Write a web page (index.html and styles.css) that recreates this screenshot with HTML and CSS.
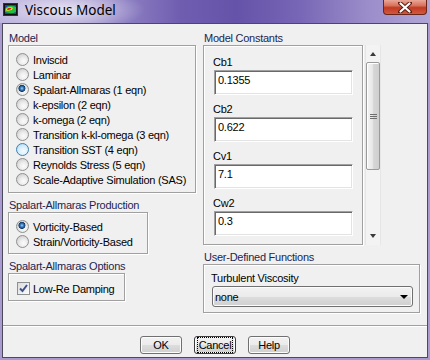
FILE: index.html
```html
<!DOCTYPE html>
<html lang="en">
<head>
    <meta charset="UTF-8">
    <title>Viscous Model</title>
    <link rel="stylesheet" href="styles.css">
</head>
<body>
    <div class="window">
        <div class="titlebar">
            <svg class="app-icon" width="15" height="13" viewBox="0 0 15 13">
                <rect x="0.5" y="0.5" width="14" height="12" fill="#111" stroke="#333"/>
                <rect x="2" y="2" width="11" height="9" fill="#1b3fd0"/>
                <path d="M2 6 C4 2, 9 2, 13 4 L13 9 C9 11, 5 10, 2 9 Z" fill="#22c040"/>
                <path d="M3 6 C5 3.5, 8 3.5, 10 5 C9 7.5, 6 8, 3 7.5 Z" fill="#e8e020"/>
                <path d="M4 6 C5.5 4.5, 7.5 4.5, 8.5 5.5 C7.5 7, 5.5 7, 4 6.8 Z" fill="#e02010"/>
            </svg>
            <span class="title">Viscous Model</span>
            <div class="close-btn">
                <svg width="14" height="11" viewBox="0 0 14 11">
                    <path d="M2 1 L12 10 M12 1 L2 10" stroke="#5a1a10" stroke-width="4" stroke-linecap="round"/>
                    <path d="M2.5 1.5 L11.5 9.5 M11.5 1.5 L2.5 9.5" stroke="#fff" stroke-width="2.2" stroke-linecap="round"/>
                </svg>
            </div>
        </div>
        <div class="client">
            <div class="main">
                <div class="col-left">
                    <div class="group">
                        <div class="group-label">Model</div>
                        <div class="group-box model-box">
                            <div class="radio"><span class="radio-dot"></span>Inviscid</div>
                            <div class="radio"><span class="radio-dot"></span>Laminar</div>
                            <div class="radio"><span class="radio-dot checked"></span>Spalart-Allmaras (1 eqn)</div>
                            <div class="radio"><span class="radio-dot"></span>k-epsilon (2 eqn)</div>
                            <div class="radio"><span class="radio-dot"></span>k-omega (2 eqn)</div>
                            <div class="radio"><span class="radio-dot"></span>Transition k-kl-omega (3 eqn)</div>
                            <div class="radio"><span class="radio-dot hover"></span>Transition SST (4 eqn)</div>
                            <div class="radio"><span class="radio-dot"></span>Reynolds Stress (5 eqn)</div>
                            <div class="radio"><span class="radio-dot"></span>Scale-Adaptive Simulation (SAS)</div>
                        </div>
                    </div>
                    <div class="group">
                        <div class="group-label">Spalart-Allmaras Production</div>
                        <div class="group-box production-box">
                            <div class="radio"><span class="radio-dot checked"></span>Vorticity-Based</div>
                            <div class="radio"><span class="radio-dot"></span>Strain/Vorticity-Based</div>
                        </div>
                    </div>
                    <div class="group">
                        <div class="group-label">Spalart-Allmaras Options</div>
                        <div class="group-box options-box">
                            <div class="check">
                                <span class="check-box">
                                    <svg width="11" height="11" viewBox="0 0 11 11">
                                        <path d="M2 5.5 L4.5 8 L9 2" fill="none" stroke="#3d4f8c" stroke-width="2"/>
                                    </svg>
                                </span>Low-Re Damping
                            </div>
                        </div>
                    </div>
                </div>
                <div class="col-right">
                    <div class="group">
                        <div class="group-label">Model Constants</div>
                        <div class="constants">
                            <div class="const-panel">
                                <div class="field">
                                    <div class="field-label">Cb1</div>
                                    <div class="field-input">0.1355</div>
                                </div>
                                <div class="field">
                                    <div class="field-label">Cb2</div>
                                    <div class="field-input">0.622</div>
                                </div>
                                <div class="field">
                                    <div class="field-label">Cv1</div>
                                    <div class="field-input">7.1</div>
                                </div>
                                <div class="field">
                                    <div class="field-label">Cw2</div>
                                    <div class="field-input">0.3</div>
                                </div>
                            </div>
                            <div class="scrollbar">
                                <div class="arrow arrow-up"></div>
                                <div class="thumb"><span class="grip"></span></div>
                                <div class="track-rest"></div>
                                <div class="arrow arrow-down"></div>
                            </div>
                        </div>
                    </div>
                    <div class="group">
                        <div class="group-label">User-Defined Functions</div>
                        <div class="group-box udf-box">
                            <div class="udf-label">Turbulent Viscosity</div>
                            <div class="dropdown">
                                <span>none</span>
                                <span class="dropdown-arrow"></span>
                            </div>
                        </div>
                    </div>
                </div>
            </div>
            <div class="separator"></div>
            <div class="buttons">
                <div class="btn">OK</div>
                <div class="btn focused"><span class="focus-ring">Cancel</span></div>
                <div class="btn">Help</div>
            </div>
        </div>
    </div>
</body>
</html>
```

FILE: styles.css
```css
body {
    margin: 0;
    font-family: "Liberation Sans", Arial, sans-serif;
    font-size: 11px;
    letter-spacing: -0.25px;
    color: #000;
    background: #a99ad0;
}
.window {
    width: 430px;
    height: 360px;
    display: flex;
    flex-direction: column;
    background: #a99ad0;
}
.titlebar {
    height: 23px;
    display: flex;
    align-items: flex-start;
    background:
        radial-gradient(ellipse 80px 22px at 65px 10px, rgba(255, 255, 255, 0.75), rgba(255, 255, 255, 0)),
        linear-gradient(90deg, #bcb3de 0%, #9d90cc 22%, #6f5eb0 42%, #6453a8 55%, #7867b6 70%, #9a8cc9 85%, #b0a5d6 100%);
}
.app-icon {
    margin: 3px 0 0 3px;
}
.title {
    margin-left: 7px;
    font-family: "Noto Sans", sans-serif;
    font-size: 13.5px;
    letter-spacing: 0;
    line-height: 21px;
    color: #000;
}
.close-btn {
    margin-left: auto;
    margin-right: 3px;
    width: 44px;
    height: 15px;
    box-sizing: border-box;
    border: 1px solid #6b2418;
    border-top: none;
    border-radius: 0 0 4px 4px;
    background: linear-gradient(#e9a797 0%, #d8725c 40%, #c23a22 55%, #cf5a40 100%);
    display: flex;
    justify-content: center;
    align-items: center;
}
.client {
    flex: 1;
    margin: 0 2px 2px 2px;
    border: 1px solid #4a4a5a;
    background: #f0f0f0;
    display: flex;
    flex-direction: column;
}
.main {
    display: flex;
    gap: 7px;
    padding: 7px 0 0 5px;
}
.col-left {
    width: 188px;
}
.col-right {
    width: 217px;
}
.group {
    margin-bottom: 5px;
}
.group-label {
    height: 14px;
    line-height: 14px;
    color: #1a2550;
    padding-left: 1px;
}
.group-box {
    border: 1px solid #a0a0a0;
    box-shadow: 1px 1px 0 #fff, inset 1px 1px 0 #fff;
}
.model-box {
    padding: 6px 0 5px 7px;
}
.production-box {
    width: 140px;
    padding: 6px 0 4px 7px;
    box-sizing: border-box;
}
.options-box {
    width: 117px;
    padding: 7px 0 4px 8px;
    box-sizing: border-box;
}
.radio, .check {
    display: flex;
    align-items: center;
    height: 15px;
}
.radio-dot {
    width: 13px;
    height: 13px;
    box-sizing: border-box;
    border-radius: 50%;
    border: 1px solid #8e8f8f;
    margin-right: 4px;
    background: radial-gradient(circle at 60% 65%, #fbfbfb 0, #eeeeee 35%, #d3d3d3 75%, #c4c4c4 100%);
}
.radio-dot.checked {
    background:
        radial-gradient(circle at 45% 40%, #a3d2f5 0, #3d82c4 1.5px, #10386b 3.2px, rgba(16, 56, 107, 0) 3.8px),
        radial-gradient(circle at 60% 65%, #fbfbfb 0, #eeeeee 35%, #d3d3d3 75%, #c4c4c4 100%);
}
.radio-dot.hover {
    border-color: #3c7fb1;
    background: radial-gradient(circle at 60% 65%, #f4fbff 0, #def1fc 40%, #b9dff6 80%, #a6d3f0 100%);
}
.check-box {
    width: 13px;
    height: 13px;
    box-sizing: border-box;
    border: 1px solid #8e8f8f;
    background: linear-gradient(135deg, #dcdcdc, #fbfbfb);
    margin-right: 3px;
    display: flex;
    align-items: center;
    justify-content: center;
}
.constants {
    display: flex;
    gap: 2px;
}
.const-panel {
    width: 160px;
    height: 200px;
    box-sizing: border-box;
    padding: 9px 0 0 9px;
    border: 1px solid #a0a0a0;
    box-shadow: inset 1px 1px 0 #fff, 1px 1px 0 #fff;
    overflow: hidden;
}
.field {
    margin-bottom: 7px;
}
.field-label {
    height: 14px;
    line-height: 14px;
    margin-bottom: 1px;
}
.field-input {
    width: 139px;
    height: 25px;
    margin-left: 1px;
    box-sizing: border-box;
    padding: 2px 0 0 3px;
    line-height: 14px;
    background: #fff;
    border-top: 1px solid #a0a0a0;
    border-left: 1px solid #a0a0a0;
    border-right: 1px solid #fff;
    border-bottom: 1px solid #fff;
    box-shadow: inset 1px 1px 0 #696969, inset -1px -1px 0 #e3e3e3;
}
.scrollbar {
    width: 16px;
    height: 200px;
    box-sizing: border-box;
    border-left: 1px solid #e6e6e6;
    border-right: 1px solid #e6e6e6;
    background: #f3f3f3;
    display: flex;
    flex-direction: column;
    align-items: center;
}
.arrow {
    height: 17px;
    width: 14px;
    position: relative;
}
.arrow::after {
    content: "";
    position: absolute;
    left: 4px;
    border-left: 3px solid transparent;
    border-right: 3px solid transparent;
}
.arrow-up::after {
    top: 7px;
    border-bottom: 4px solid #3a3a3a;
}
.arrow-down::after {
    top: 6px;
    border-top: 4px solid #3a3a3a;
}
.thumb {
    width: 14px;
    height: 108px;
    box-sizing: border-box;
    border: 1px solid #9a9a9a;
    border-radius: 2px;
    background: linear-gradient(90deg, #f4f4f4 0%, #e8e8e8 45%, #d6d6d6 55%, #cfcfcf 100%);
    box-shadow: inset 1px 1px 0 #fff;
    display: flex;
    align-items: center;
    justify-content: center;
}
.grip {
    width: 7px;
    height: 5px;
    background: linear-gradient(#6e6e6e 0 1px, transparent 1px 2px, #6e6e6e 2px 3px, transparent 3px 4px, #6e6e6e 4px 5px);
}
.track-rest {
    flex: 1;
}
.udf-box {
    padding: 6px 0 5px 7px;
}
.udf-label {
    height: 14px;
    line-height: 14px;
    margin-bottom: 1px;
}
.dropdown {
    width: 201px;
    height: 21px;
    margin-left: 1px;
    box-sizing: border-box;
    border: 1px solid #707070;
    border-radius: 3px;
    background: linear-gradient(#f2f2f2 0%, #ebebeb 50%, #dddddd 51%, #cfcfcf 100%);
    box-shadow: inset 0 0 0 1px #fcfcfc;
    display: flex;
    align-items: center;
    justify-content: space-between;
    padding: 0 4px 0 2px;
}
.dropdown-arrow {
    border-left: 4px solid transparent;
    border-right: 4px solid transparent;
    border-top: 4px solid #000;
}
.separator {
    margin-top: 7px;
    height: 1px;
    background: #a0a0a0;
    border-bottom: 1px solid #fff;
}
.buttons {
    display: flex;
    justify-content: center;
    gap: 12px;
    margin-top: 9px;
}
.btn {
    width: 42px;
    height: 18px;
    box-sizing: border-box;
    border: 1px solid #707070;
    border-radius: 3px;
    background: linear-gradient(#f2f2f2 0%, #ebebeb 50%, #dddddd 51%, #cfcfcf 100%);
    box-shadow: inset 0 0 0 1px #fcfcfc;
    display: flex;
    align-items: center;
    justify-content: center;
    line-height: 14px;
}
.btn.focused {
    border-color: #3c3c3c;
}
.focus-ring {
    outline: 1px dotted #000;
    padding: 0 1px;
}
```
